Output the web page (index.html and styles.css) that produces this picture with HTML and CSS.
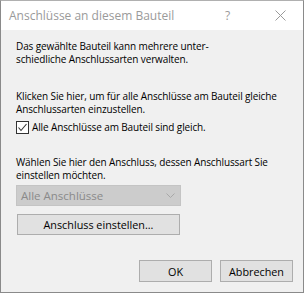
FILE: index.html
```html
<!DOCTYPE html>
<html lang="de">
<head>
<meta charset="utf-8">
<link rel="stylesheet" href="styles.css">
</head>
<body>
<div class="window">
  <div class="titlebar">
    <span class="title">Anschlüsse an diesem Bauteil</span>
    <span class="help">?</span>
    <span class="close"><svg width="11" height="11" viewBox="0 0 11 11"><path d="M0.5 0.5 L10.5 10.5 M10.5 0.5 L0.5 10.5" stroke="#9a9a9a" stroke-width="1" fill="none"/></svg></span>
  </div>
  <div class="content">
    <p class="para first">Das gewählte Bauteil kann mehrere unter-<br>schiedliche Anschlussarten verwalten.</p>
    <p class="para second">Klicken Sie hier, um für alle Anschlüsse am Bauteil gleiche<br>Anschlussarten einzustellen.</p>
    <label class="check"><span class="box"><svg width="11" height="11" viewBox="0 0 11 11"><path d="M1.5 5.5 L4 8.5 L9.5 2" stroke="#333" stroke-width="1.1" fill="none"/></svg></span>Alle Anschlüsse am Bauteil sind gleich.</label>
    <p class="para third">Wählen Sie hier den Anschluss, dessen Anschlussart Sie<br>einstellen möchten.</p>
    <div class="select"><span>Alle Anschlüsse</span><svg width="9" height="5" viewBox="0 0 9 5"><path d="M0.5 0.5 L4.5 4.5 L8.5 0.5" stroke="#a8a8a8" fill="none"/></svg></div>
    <button class="btn wide">Anschluss einstellen...</button>
    <div class="actions">
      <button class="btn small">OK</button>
      <button class="btn small">Abbrechen</button>
    </div>
  </div>
</div>
</body>
</html>
```
FILE: styles.css
```css
* { box-sizing: border-box; }
html, body { margin: 0; padding: 0; background: #ffffff; }
body { font-family: "Open Sans", "Noto Sans", sans-serif; }
.window {
  width: 304px;
  height: 293px;
  border: 1px solid #8a8a8a;
  border-top-color: #b0b0b0;
  background: #f0f0f0;
  display: flex;
  flex-direction: column;
}
.titlebar {
  height: 29px;
  background: #ffffff;
  display: flex;
  align-items: center;
  color: #9a9a9a;
  font-size: 12px;
}
.title { margin-left: 8px; flex: 1; }
.help { width: 12px; margin-right: 38px; font-size: 12px; }
.close { width: 11px; height: 11px; margin-right: 17px; display: flex; }
.content {
  padding: 10px 10px 0 15px;
  font-size: 10px;
  line-height: 13px;
  letter-spacing: -0.12px;
  color: #000;
  display: flex;
  flex-direction: column;
}
.para { margin: 0; }
.second { margin-top: 24px; }
.check { margin-top: 5px; display: flex; align-items: center; height: 13px; }
.box {
  width: 13px; height: 13px;
  border: 1px solid #333;
  background: #fff;
  margin-right: 3px;
  display: flex; align-items: center; justify-content: center;
}
.third { margin-top: 22px; }
.select {
  margin-top: 3px;
  width: 165px; height: 21px;
  background: #cccccc;
  border: 1px solid #c4c4c4;
  color: #8a8a8a;
  font-size: 11.5px;
  letter-spacing: 0;
  display: flex; align-items: center; justify-content: space-between;
  padding: 0 5px 0 4px;
}
.btn {
  font-family: inherit;
  font-size: 10.8px;
  color: #000;
  background: #e1e1e1;
  border: 1px solid #adadad;
  padding: 0;
  margin: 0;
}
.wide { margin-top: 8px; margin-left: 1px; width: 163px; height: 21px; }
.actions { margin-top: 25px; display: flex; justify-content: flex-end; gap: 8px; }
.small { width: 73px; height: 22px; }
```
